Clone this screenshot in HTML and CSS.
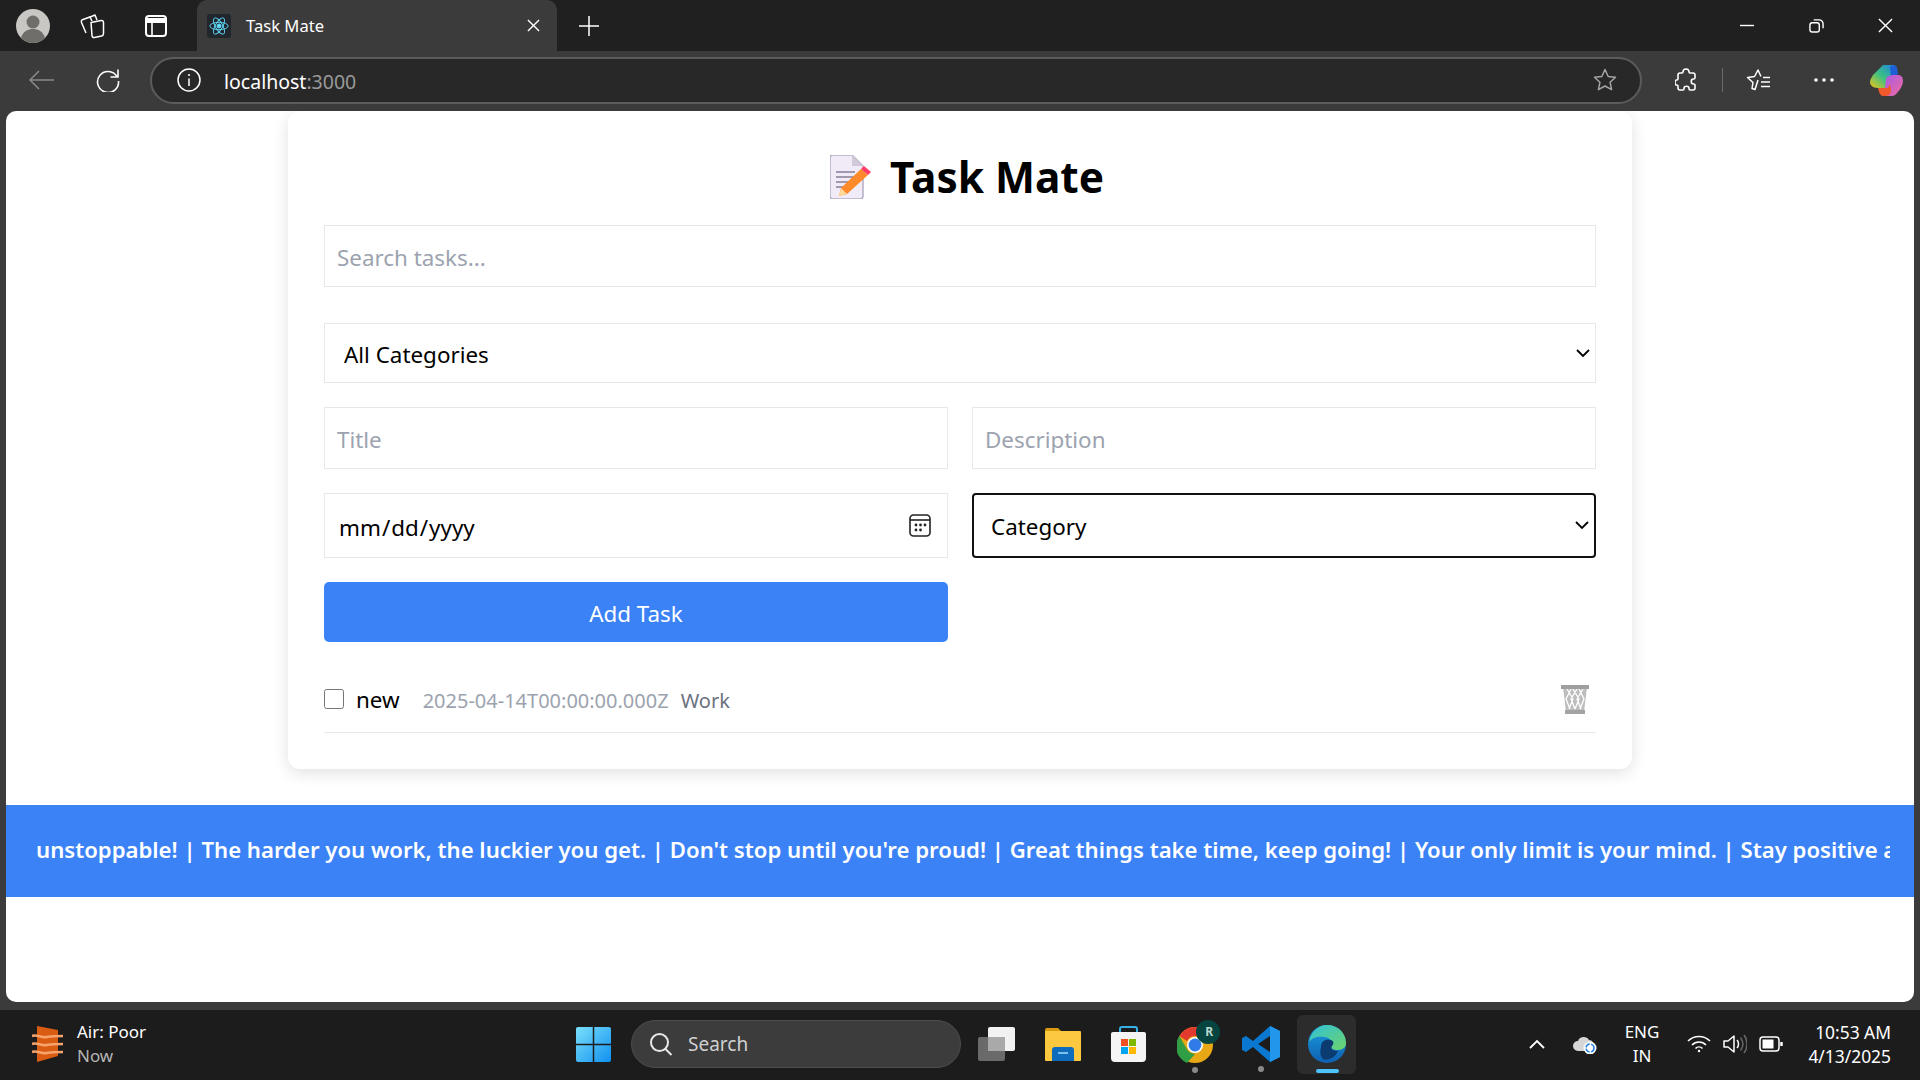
FILE: index.html
```html
<!DOCTYPE html>
<html lang="en">
<head>
    <meta charset="UTF-8">
    <meta name="viewport" content="width=device-width, initial-scale=1.0">
    <title>Task Mate</title>
    <link rel="stylesheet" href="styles.css">
</head>
<body>
    <div class="tabstrip">
        <svg class="avatar" viewBox="0 0 34 34"><circle cx="17" cy="17" r="17" fill="#c9c7c3"/><circle cx="17" cy="13" r="6.5" fill="#6f6e6b"/><path d="M5 29c2-7 7-9 12-9s10 2 12 9a17 17 0 0 1-24 0z" fill="#6f6e6b"/></svg>
        <svg class="tab-ico collections" viewBox="0 0 26 26" fill="none" stroke="#fff" stroke-width="1.500" stroke-linejoin="round"><path d="M11 9.500 21 7.500c1.500-.3 2.500.5 2.500 2v11c0 1.500-.7 2.300-2 2.600l-7 1.400c-1.500.3-2.500-.5-2.500-2z"/><path d="M12 8 10 4 3 6.500c-1.500.5-2 1.500-1.500 3L6 20"/><path d="M17 7l-2-5-6 2.500"/></svg>
        <svg class="tab-ico layout" viewBox="0 0 22 22" fill="none" stroke="#fff" stroke-width="2"><rect x="1" y="1" width="20" height="20" rx="3"/><path d="M7 7v14" stroke-width="1.600"/><path d="M1 4h20v3H1z" fill="#fff"/></svg>
        <div class="tab">
            <span class="favicon">
                <svg viewBox="0 0 24 24" fill="none" stroke="#61dafb" stroke-width="1"><circle cx="12" cy="12" r="2.200" fill="#61dafb"/><ellipse cx="12" cy="12" rx="10" ry="4"/><ellipse cx="12" cy="12" rx="10" ry="4" transform="rotate(60 12 12)"/><ellipse cx="12" cy="12" rx="10" ry="4" transform="rotate(120 12 12)"/></svg>
            </span>
            <span class="tab-title">Task Mate</span>
            <svg class="tab-close" viewBox="0 0 14 14" stroke="#fff" stroke-width="1.500"><path d="M1 1l12 12M13 1 1 13"/></svg>
        </div>
        <svg class="new-tab" viewBox="0 0 20 20" stroke="#fff" stroke-width="1.500"><path d="M10 0v20M0 10h20"/></svg>
        <div class="window-btns">
            <svg viewBox="0 0 16 16" stroke="#fff" stroke-width="1.500"><path d="M0 8h15"/></svg>
            <svg viewBox="0 0 16 16" fill="none" stroke="#fff" stroke-width="1.500"><rect x="1" y="5" width="10" height="10" rx="2.500"/><path d="M5 2h6c2 0 4 2 4 4v5"/></svg>
            <svg viewBox="0 0 16 16" stroke="#fff" stroke-width="1.500"><path d="M1 1l14 14M15 1 1 15"/></svg>
        </div>
    </div>

    <div class="toolbar">
        <svg class="back" viewBox="0 0 25 20" fill="none" stroke="#8b8b8b" stroke-width="1.500"><path d="M25 10H1M10 1l-9 9 9 9"/></svg>
        <svg class="reload" viewBox="0 0 24 24" fill="none" stroke="#fff" stroke-width="1.600"><path d="M21 8.500A10.500 10.500 0 1 0 22.500 13M22 1.500V9h-7.500"/></svg>
        <div class="addressbar">
            <svg class="info" viewBox="0 0 24 24" fill="none" stroke="#fff" stroke-width="1.500"><circle cx="12" cy="12" r="11"/><path d="M12 10.500V18M12 6v2"/></svg>
            <span class="url">localhost<span class="url-port">:3000</span></span>
            <svg class="star" viewBox="0 0 24 24" fill="none" stroke="#a5a5a5" stroke-width="1.500"><path d="m12 1.500 3.200 7 7.300.8-5.400 5 1.500 7.400L12 18l-6.600 3.700 1.500-7.400-5.400-5 7.300-.8z" stroke-linejoin="round"/></svg>
        </div>
        <svg class="extensions" viewBox="0 0 22 24" fill="none" stroke="#fff" stroke-width="1.600"><path d="M8 4c0-4 6-4 6 0 0 1 0 1 1 1h3c1 0 2 1 2 2v3c0 1-1 1-1.500 1-3 0-3 5 0 5 .5 0 1.500 0 1.500 1v3c0 1-1 2-2 2h-3c-1 0-1-1-1-1.500 0-3-5-3-5 0 0 .5 0 1.500-1 1.500H5c-1 0-2-1-2-2v-2c0-1-1-1-1.500-1-2 0-2-5 0-5 .5 0 1.500 0 1.500-1V7c0-1 1-2 2-2h2c1 0 1 0 1-1z" stroke-linejoin="round"/></svg>
        <span class="toolbar-sep"></span>
        <svg class="favs" viewBox="0 0 24 24" fill="none" stroke="#fff" stroke-width="1.500"><path d="M12 12 9 21.500l-3-1 1-6-5.500-5 7-1L12 2l3 6.500M17 9.500h7M15 14h9M15 18.500h9" stroke-linejoin="round"/></svg>
        <svg class="dots" viewBox="0 0 20 4" fill="#fff"><circle cx="2" cy="2" r="1.800"/><circle cx="10" cy="2" r="1.800"/><circle cx="18" cy="2" r="1.800"/></svg>
        <svg class="copilot" viewBox="0 0 33 31">
            <defs>
                <linearGradient id="cp1" x1="0" y1="1" x2="1" y2="0"><stop offset="0" stop-color="#f5c518"/><stop offset=".45" stop-color="#3fc27f"/><stop offset="1" stop-color="#1a7fe8"/></linearGradient>
                <linearGradient id="cp2" x1="0" y1="0" x2="1" y2="1"><stop offset="0" stop-color="#a65be6"/><stop offset="1" stop-color="#f26aa0"/></linearGradient>
            </defs>
            <path d="M11 2c1-1.500 2-2 4-2h8c2 0 3 1 4 3l-9 20H8c-5 0-8-3-8-6 0-3 2-5 3-7z" fill="url(#cp1)"/>
            <path d="M20 2c2-2 6-2 7 1l1 6-7 5z" fill="#1f5fd6"/>
            <path d="M16 14c1-3 4-4 7-4h5c3 0 5 2 5 6s-3 9-6 12c-1.500 2-3 3-5 3h-8z" fill="url(#cp2)"/>
            <path d="M8 23h10l2-4 1 6c0 3-2 6-5 6h-3c-3 0-4-4-5-8z" fill="#f0592b"/>
        </svg>
    </div>

    <div class="viewport">
        <main class="card">
            <h1 class="heading">
                <svg class="note-icon" viewBox="0 0 41 44">
                    <path d="M3 0h19l11 11v30a3 3 0 0 1-3 3H3a3 3 0 0 1-3-3V3a3 3 0 0 1 3-3z" fill="#f1ebf7" stroke="#b4aec4" stroke-width="1.500"/>
                    <path d="M22 0v11h11z" fill="#cfc9d9"/>
                    <path d="M6 17h19M6 22h19M6 27h14M6 32h8" stroke="#a099b2" stroke-width="2"/>
                    <path d="M31 14l7 6-21 19-8 2 2-8z" fill="#ff8a2b"/>
                    <path d="M31 14l3-3 7 6-3 3z" fill="#ff3d68"/>
                    <path d="M11 33l6 6-8 2z" fill="#ffd89a"/>
                </svg>
                Task Mate
            </h1>
            <input class="field field-search" type="text" placeholder="Search tasks...">
            <select class="field field-select field-filter">
                <option>All Categories</option>
            </select>
            <form class="task-form">
                <input class="field field-text" type="text" placeholder="Title">
                <input class="field field-text" type="text" placeholder="Description">
                <input class="field field-date" type="date">
                <select class="field field-select field-category">
                    <option>Category</option>
                </select>
                <button class="add-btn" type="button">Add Task</button>
            </form>
            <div class="task-row">
                <input class="task-check" type="checkbox">
                <span class="task-name">new</span>
                <span class="task-date">2025-04-14T00:00:00.000Z</span>
                <span class="task-cat">Work</span>
                <svg class="trash" viewBox="0 0 30 30" fill="none">
                    <path d="M3 3h24l-3 25H6z" fill="#bdbdbd"/>
                    <path d="M7 5l6 10-4 10M13 5l6 10-4 10M19 5l5 10-4 10M23 5l-6 10 4 10M17 5l-6 10 4 10M11 5 6 15l4 10" stroke="#fff" stroke-width="1.300"/>
                    <path d="M1 3h28" stroke="#9f9f9f" stroke-width="4"/>
                    <path d="M5 28h20" stroke="#a3a3a3" stroke-width="4"/>
                </svg>
            </div>
        </main>
        <div class="quote-bar">
            <div class="quote-text">unstoppable! | The harder you work, the luckier you get. | Don't stop until you're proud! | Great things take time, keep going! | Your only limit is your mind. | Stay positive and keep moving forward.</div>
        </div>
    </div>

    <footer class="taskbar">
        <div class="widget">
            <svg class="widget-ico" viewBox="0 0 31 36">
                <path d="M5 0l21 4v26L5 36z" fill="#d95c12"/>
                <path d="M0 10c5-2 9 2 15 1s10-1 16-1M0 18c5-2 9 2 15 1s10-1 16-1M0 26c5-2 9 2 15 1s10-1 16-1" stroke="#f6a46c" stroke-width="2.600" fill="none"/>
            </svg>
            <div>
                <div class="widget-title">Air: Poor</div>
                <div class="widget-sub">Now</div>
            </div>
        </div>
        <div class="task-center">
            <svg class="win-logo" viewBox="0 0 35 35">
                <defs><linearGradient id="win" x1="0" y1="0" x2="1" y2="1"><stop offset="0" stop-color="#7be0fb"/><stop offset="1" stop-color="#0f8fef"/></linearGradient></defs>
                <rect width="35" height="35" fill="url(#win)" rx="2"/>
                <path d="M17.500 0v35M0 17.500h35" stroke="#1c1c1c" stroke-width="1.500"/>
            </svg>
            <div class="search-pill">
                <svg viewBox="0 0 24 24" fill="none" stroke="#e8e8e8" stroke-width="2"><circle cx="10.500" cy="10.500" r="8.500"/><path d="m16.500 17 6 6"/></svg>
                <span>Search</span>
            </div>
            <svg class="app app-taskview" viewBox="0 0 37 34"><rect y="10" width="27" height="24" rx="2" fill="#6a6a6a"/><rect x="10" width="27" height="24" rx="2" fill="#f2f2f2"/><rect x="10" y="10" width="17" height="14" fill="#a9a9a9"/></svg>
            <svg class="app app-files" viewBox="0 0 36 34"><path d="M0 3a2 2 0 0 1 2-2h11l4 4h-17z" fill="#d99a10"/><rect y="4" width="36" height="30" rx="1" fill="#fcc83f"/><path d="M7 23a3 3 0 0 1 3-3h16a3 3 0 0 1 3 3v11H7z" fill="#0f6cbd"/><path d="M13 26h10" stroke="#7cc0ee" stroke-width="2"/></svg>
            <svg class="app app-store" viewBox="0 0 35 36"><path d="M9 7V3a2 2 0 0 1 2-2h13a2 2 0 0 1 2 2v4" fill="none" stroke="#35b1e8" stroke-width="2"/><path d="M2 6h31a2 2 0 0 1 2 2v24a4 4 0 0 1-4 4H4a4 4 0 0 1-4-4V8a2 2 0 0 1 2-2z" fill="#f5f5f5"/><rect x="10" y="13" width="7" height="7" fill="#f25022"/><rect x="18" y="13" width="7" height="7" fill="#7fba00"/><rect x="10" y="21" width="7" height="7" fill="#00a4ef"/><rect x="18" y="21" width="7" height="7" fill="#ffb900"/></svg>
            <span class="app-wrap app-wrap-chrome">
                <svg class="app app-chrome" viewBox="0 0 43 43">
                    <circle cx="18" cy="25" r="18" fill="#e8a714"/>
                    <path d="M2.400 16A18 18 0 0 1 33.600 16H18a9 9 0 0 0-8 5z" fill="#e23a2e"/>
                    <path d="M2.400 16 11 31a9 9 0 0 0 7 3l-8 9A18 18 0 0 1 2.400 16z" fill="#2f9e44"/>
                    <circle cx="18" cy="25" r="8" fill="#fff"/>
                    <circle cx="18" cy="25" r="6.400" fill="#2f7be8"/>
                    <circle cx="31" cy="12" r="12" fill="#06453f"/>
                </svg>
                <span class="chrome-badge">R</span>
            </span>
            <span class="app-wrap app-wrap-code">
                <svg class="app app-vscode" viewBox="0 0 38 36"><path d="M28 0l10 5v26l-10 5-17-15-7 5-4-2V12l4-2 7 5z" fill="#0a78d0"/><path d="M28 0l10 5v26l-10 5z" fill="#2196ea"/><path d="M28 10 16 18l12 8z" fill="#1c1c1c"/></svg>
            </span>
            <span class="app-active">
                <svg class="app-edge" viewBox="0 0 38 38">
                    <defs>
                        <linearGradient id="edge1" x1="0" y1="0" x2="1" y2="1"><stop offset="0" stop-color="#2fc1d8"/><stop offset="1" stop-color="#6fd46a"/></linearGradient>
                        <linearGradient id="edge2" x1="0" y1="0" x2="0" y2="1"><stop offset="0" stop-color="#1a9ee0"/><stop offset="1" stop-color="#0f5fb0"/></linearGradient>
                    </defs>
                    <circle cx="19" cy="19" r="19" fill="url(#edge2)"/>
                    <path d="M1 17C3 6 11 0 19 0c11 0 19 8 19 18 0 4-3 7-8 7-4 0-8-1-7-5 1-3 0-7-6-8-6-1-13 0-16 5z" fill="url(#edge1)"/>
                    <path d="M13 22c0-6 5-9 10-7 3 1 3 4 1 6-2 3 1 5 6 5-3 7-10 10-15 8-3-3-3-7-2-12z" fill="#0b3b70"/>
                </svg>
                <span class="active-line"></span>
            </span>
        </div>
        <div class="tray">
            <svg class="tray-chevron" viewBox="0 0 16 10" fill="none" stroke="#fff" stroke-width="1.800"><path d="m1 9 7-7 7 7"/></svg>
            <svg class="tray-cloud" viewBox="0 0 24 20"><path d="M5 17a5 5 0 0 1 0-10c1-4 8-6 11-1 3 0 5 3 5 6v5z" fill="#d6d6d6"/><circle cx="17" cy="14" r="6.500" fill="#fff"/><circle cx="17" cy="14" r="4" fill="none" stroke="#1f7fe0" stroke-width="1.500" stroke-dasharray="5 1.500"/></svg>
            <div class="tray-lang">ENG<br>IN</div>
            <svg class="tray-wifi" viewBox="0 0 24 18" fill="none" stroke="#fff" stroke-width="1.600"><path d="M1 6c6-6 16-6 22 0M5 10c4-4 10-4 14 0M8.500 13.500c2-2 5-2 7 0"/><circle cx="12" cy="16" r="1.200" fill="#fff" stroke="none"/></svg>
            <svg class="tray-volume" viewBox="0 0 24 20" fill="none" stroke="#fff" stroke-width="1.500"><path d="M1 7v6h4l6 5V2L5 7z" stroke-linejoin="round"/><path d="M14 6c2 2 2 6 0 8"/><path d="M17.500 3.500c3 4 3 9 0 13M21 1c4 5 4 13 0 18" stroke="#666"/></svg>
            <svg class="tray-battery" viewBox="0 0 24 16" fill="none" stroke="#fff" stroke-width="1.500"><rect x="1" y="1" width="19" height="14" rx="3"/><rect x="3.500" y="3.500" width="11" height="9" fill="#fff" stroke="none"/><path d="M22.500 6v4" stroke-width="2.500"/></svg>
            <div class="tray-clock">10:53 AM<br>4/13/2025</div>
        </div>
    </footer>
</body>
</html>
```

FILE: styles.css
```css
* {
    box-sizing: border-box;
}
body {
    font-family: "Noto Sans", "Open Sans", sans-serif;
    margin: 0;
    width: 1920px;
    height: 1080px;
    overflow: hidden;
    background: #3b3b3b;
    display: flex;
    flex-direction: column;
}
svg {
    display: block;
    flex: none;
}

/* browser tab strip */
.tabstrip {
    height: 51px;
    background: #202020;
    display: flex;
    align-items: center;
    padding-left: 16px;
}
.avatar {
    width: 34px;
    height: 34px;
}
.tab-ico.collections {
    width: 26px;
    height: 26px;
    margin-left: 30px;
}
.tab-ico.layout {
    width: 22px;
    height: 22px;
    margin-left: 39px;
}
.tab {
    width: 360px;
    height: 51px;
    margin-left: 30px;
    background: #3b3b3b;
    border-radius: 10px 10px 0 0;
    display: flex;
    align-items: center;
    padding-left: 10px;
}
.favicon {
    width: 24px;
    height: 24px;
    background: #20262b;
    border-radius: 3px;
    padding: 1px;
}
.tab-title {
    color: #fff;
    font-size: 16.6px;
    margin-left: 15px;
    flex: 1;
}
.tab-close {
    width: 13px;
    height: 13px;
    margin-right: 17px;
}
.new-tab {
    width: 20px;
    height: 20px;
    margin-left: 22px;
}
.window-btns {
    margin-left: auto;
    display: flex;
    gap: 54px;
    padding-right: 27px;
}
.window-btns svg {
    width: 15px;
    height: 15px;
}

/* browser toolbar */
.toolbar {
    height: 60px;
    background: #3b3b3b;
    display: flex;
    align-items: center;
    padding-bottom: 2px;
}
.back {
    width: 25px;
    height: 20px;
    margin-left: 29px;
}
.reload {
    width: 24px;
    height: 24px;
    margin-left: 42px;
}
.addressbar {
    width: 1492px;
    height: 47px;
    margin-left: 30px;
    background: #282828;
    border: 2px solid #5c5c5c;
    border-radius: 24px;
    display: flex;
    align-items: center;
    padding-left: 25px;
}
.info {
    width: 24px;
    height: 24px;
}
.url {
    color: #fff;
    font-size: 19.5px;
    margin-left: 23px;
    padding-top: 2px;
    flex: 1;
}
.url-port {
    color: #9a9a9a;
}
.star {
    width: 24px;
    height: 24px;
    margin-right: 23px;
}
.extensions {
    width: 22px;
    height: 24px;
    margin-left: 33px;
}
.toolbar-sep {
    width: 1px;
    height: 24px;
    background: #6a6a6a;
    margin-left: 25px;
}
.favs {
    width: 24px;
    height: 24px;
    margin-left: 23px;
}
.dots {
    width: 20px;
    height: 4px;
    margin-left: 44px;
}
.copilot {
    width: 33px;
    height: 31px;
    margin-left: 36px;
}

/* page area */
.viewport {
    width: 1908px;
    height: 891px;
    margin-left: 6px;
    background: #fff;
    border-radius: 10px;
    overflow: hidden;
}
.card {
    width: 1344px;
    margin: 0 auto;
    padding: 36px;
    background: #fff;
    border-radius: 12px;
    box-shadow: 0 4px 16px rgba(0, 0, 0, 0.12);
}
.heading {
    margin: 0 0 19px;
    padding-left: 14px;
    height: 59px;
    display: flex;
    justify-content: center;
    align-items: center;
    gap: 19px;
    font-size: 42.4px;
    line-height: 59px;
    font-weight: 700;
    color: #000;
}
.note-icon {
    width: 41px;
    height: 44px;
}
.field {
    display: block;
    width: 100%;
    background: #fff;
    border: 1px solid #e5e7eb;
    font-family: inherit;
    font-size: 22.4px;
    color: #000;
    padding: 2px 12px 0;
    border-radius: 0;
    outline: none;
}
.field::placeholder {
    color: #9ca3af;
}
.field-select {
    appearance: none;
    padding: 2px 19px 0;
    background-image: url("data:image/svg+xml,%3Csvg xmlns='http://www.w3.org/2000/svg' viewBox='0 0 14 9' fill='none' stroke='%23000' stroke-width='1.800'%3E%3Cpath d='M1 1l6 6 6-6'/%3E%3C/svg%3E");
    background-repeat: no-repeat;
    background-size: 14px 9px;
    background-position: right 5px center;
}
.field-search {
    height: 62px;
    margin-bottom: 36px;
}
.field-filter {
    height: 60px;
    margin-bottom: 24px;
}
.task-form {
    display: grid;
    grid-template-columns: 1fr 1fr;
    column-gap: 24px;
    row-gap: 24px;
}
.field-text {
    height: 62px;
}
.field-date {
    height: 65px;
    padding: 3px 13px 0;
}
.field-date::-webkit-calendar-picker-indicator {
    width: 22px;
    height: 23px;
    padding: 0;
    margin: 0 3px 3px 0;
    background-image: url("data:image/svg+xml,%3Csvg xmlns='http://www.w3.org/2000/svg' viewBox='0 0 22 23' fill='none' stroke='%23222'%3E%3Crect x='1' y='1' width='20' height='21' rx='3.500' stroke-width='1.600'/%3E%3Cpath d='M1 6h20' stroke-width='1.600'/%3E%3Cg fill='%23222' stroke='none'%3E%3Ccircle cx='7' cy='11' r='1.400'/%3E%3Ccircle cx='11.500' cy='11' r='1.400'/%3E%3Ccircle cx='16' cy='11' r='1.400'/%3E%3Ccircle cx='7' cy='16' r='1.400'/%3E%3Ccircle cx='11.500' cy='16' r='1.400'/%3E%3C/g%3E%3C/svg%3E");
    background-size: 22px 23px;
}
.field-category {
    height: 65px;
    border: 2px solid #111;
    border-radius: 4px;
    padding-left: 17px;
}
.add-btn {
    height: 60px;
    padding: 2px 0 0;
    background: #3b82f6;
    color: #fff;
    font-family: inherit;
    font-size: 22.4px;
    border: none;
    border-radius: 5px;
}
.task-row {
    height: 91px;
    display: flex;
    align-items: center;
    border-bottom: 1px solid #e5e7eb;
    padding-top: 23px;
}
.task-check {
    width: 20px;
    height: 20px;
    margin: 0 12px 0 0;
}
.task-name {
    font-size: 22.4px;
    color: #000;
    margin-right: 23px;
    padding-top: 2px;
}
.task-date {
    font-size: 20px;
    color: #9ca3af;
    margin-right: 12px;
    padding-top: 3px;
}
.task-cat {
    font-size: 20px;
    color: #6b7280;
    padding-top: 3px;
}
.trash {
    width: 30px;
    height: 30px;
    margin-left: auto;
    margin-right: 6px;
}
.quote-bar {
    height: 92px;
    margin-top: 36px;
    background: #3b82f6;
    padding: 0 24px 0 30px;
    display: flex;
    align-items: center;
}
.quote-text {
    color: #fff;
    font-size: 22.15px;
    font-weight: 600;
    white-space: nowrap;
    overflow: hidden;
    padding-bottom: 5px;
}

/* windows taskbar */
.taskbar {
    height: 70px;
    margin-top: 8px;
    padding-bottom: 2px;
    background: #1c1c1c;
    color: #fff;
    display: flex;
    align-items: center;
    position: relative;
}
.widget {
    display: flex;
    align-items: center;
    gap: 14px;
    margin-left: 32px;
    width: 544px;
    font-size: 17px;
    line-height: 24px;
}
.widget-ico {
    width: 31px;
    height: 36px;
}
.widget-sub {
    color: #b5b5b5;
}
.task-center {
    display: flex;
    align-items: center;
}
.win-logo {
    width: 35px;
    height: 35px;
}
.search-pill {
    width: 330px;
    height: 48px;
    margin-left: 20px;
    background: #3c3c3c;
    border: 1px solid #4c4c4c;
    border-radius: 24px;
    display: flex;
    align-items: center;
    padding-left: 17px;
    gap: 15px;
    font-size: 19px;
    color: #d0d0d0;
}
.search-pill svg {
    width: 24px;
    height: 24px;
}
.app-taskview {
    width: 37px;
    height: 34px;
    margin-left: 17px;
}
.app-files {
    width: 36px;
    height: 34px;
    margin-left: 30px;
}
.app-store {
    width: 35px;
    height: 36px;
    margin-left: 30px;
}
.app-wrap {
    position: relative;
    display: block;
}
.app-wrap::after {
    content: "";
    position: absolute;
    bottom: -10px;
    width: 6px;
    height: 6px;
    background: #8a8a8a;
    border-radius: 50%;
}
.app-chrome {
    width: 43px;
    height: 43px;
}
.app-wrap-chrome {
    margin-left: 31px;
    margin-bottom: 6px;
}
.app-wrap-chrome::after {
    left: 15px;
}
.chrome-badge {
    position: absolute;
    top: 3px;
    right: 7px;
    font-size: 12px;
    font-weight: 700;
    color: #b8d8d0;
}
.app-wrap-code {
    margin-left: 22px;
}
.app-wrap-code::after {
    left: 16px;
    bottom: -10px;
}
.app-vscode {
    width: 38px;
    height: 36px;
}
.app-active {
    position: relative;
    width: 59px;
    height: 59px;
    margin-left: 17px;
    background: #2c2c2c;
    border-radius: 6px;
    display: flex;
    align-items: center;
    justify-content: center;
}
.app-edge {
    width: 38px;
    height: 38px;
}
.active-line {
    position: absolute;
    left: 19px;
    bottom: 1px;
    width: 23px;
    height: 4px;
    background: #4cc2ff;
    border-radius: 2px;
}
.tray {
    display: flex;
    align-items: center;
    margin-left: 173px;
    font-size: 17px;
    line-height: 24px;
}
.tray-chevron {
    width: 16px;
    height: 10px;
}
.tray-cloud {
    width: 24px;
    height: 20px;
    margin-left: 28px;
}
.tray-lang {
    width: 50px;
    margin-left: 20px;
    text-align: center;
}
.tray-wifi {
    width: 24px;
    height: 18px;
    margin-left: 20px;
}
.tray-volume {
    width: 24px;
    height: 20px;
    margin-left: 12px;
}
.tray-battery {
    width: 24px;
    height: 16px;
    margin-left: 12px;
}
.tray-clock {
    width: 108px;
    text-align: right;
    font-size: 17.4px;
}
```
